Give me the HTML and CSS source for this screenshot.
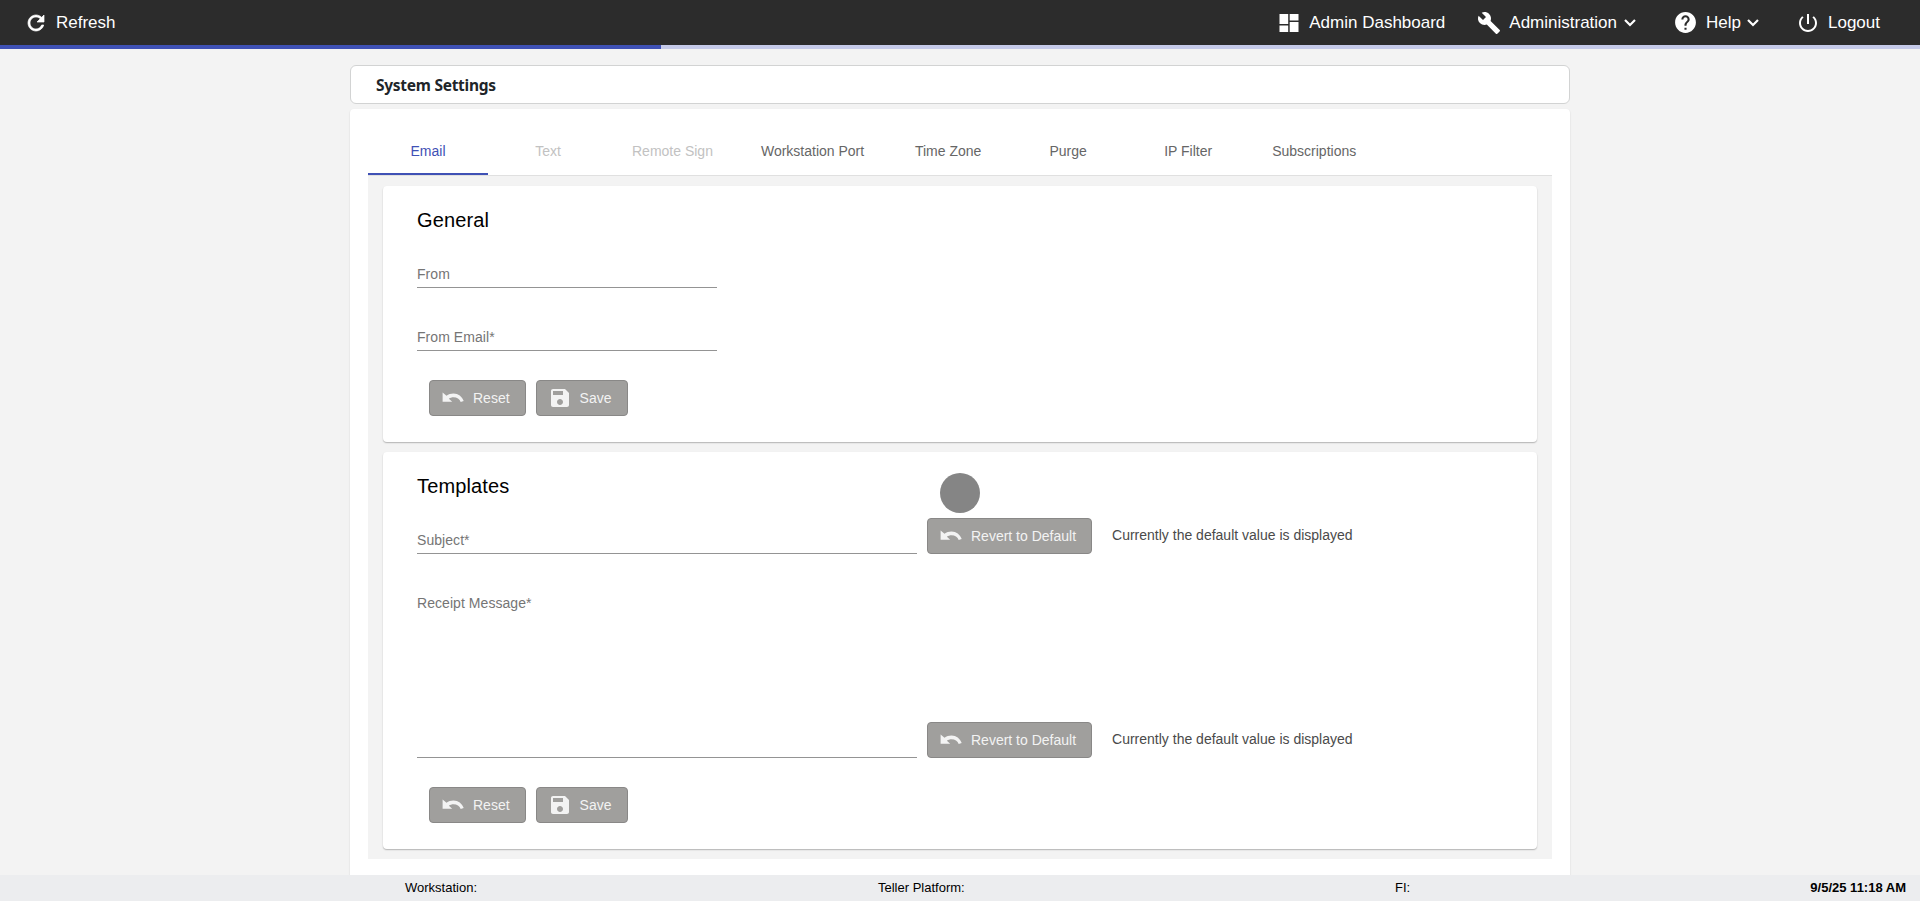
FILE: index.html
```html
<!DOCTYPE html>
<html lang="en">
<head>
<meta charset="utf-8">
<title>System Settings</title>
<link rel="stylesheet" href="styles.css">
</head>
<body>
<svg class="defs" aria-hidden="true">
  <symbol id="undo" viewBox="0 0 24 24"><path d="M12.5 7.5c-2.65 0-5.05.85-7 2.3L1.6 6.4v9.4h9.6l-3.3-3.1c1.3-.95 2.9-1.5 4.6-1.5 3.4 0 6.2 1.9 7.2 4.9l3-1C21.2 10.6 17.1 7.5 12.5 7.5z"/></symbol>
  <symbol id="save" viewBox="0 0 24 24"><path d="M17 3H5c-1.11 0-2 .9-2 2v14c0 1.1.89 2 2 2h14c1.1 0 2-.9 2-2V7l-4-4zm-5 16c-1.66 0-3-1.34-3-3s1.34-3 3-3 3 1.34 3 3-1.34 3-3 3zm3-10H5V5h10v4z"/></symbol>
  <symbol id="chevron" viewBox="0 0 12 8"><path d="M1 1l5 5 5-5" fill="none" stroke="currentColor" stroke-width="2.2"/></symbol>
</svg>
<div class="app">
  <header class="toolbar">
    <a class="nav refresh"><svg viewBox="0 0 24 24"><path d="M17.65 6.35C16.2 4.9 14.21 4 12 4c-4.42 0-7.99 3.58-7.99 8s3.57 8 7.99 8c3.73 0 6.84-2.55 7.73-6h-2.08c-.82 2.33-3.04 4-5.65 4-3.31 0-6-2.69-6-6s2.69-6 6-6c1.66 0 3.14.69 4.22 1.78L13 11h7V4l-2.35 2.35z" stroke="currentColor" stroke-width=".7"/></svg><span>Refresh</span></a>
    <a class="nav dashboard"><svg viewBox="0 0 24 24"><path d="M2.5 13h8.7V3H2.500v10zm0 8h8.700v-6.500H2.500V21zm10.200 0h8.800V11h-8.800v10zm0-18v6.500h8.800V3h-8.800z"/></svg><span>Admin Dashboard</span></a>
    <a class="nav administration"><svg viewBox="0 0 24 24"><path d="M22.7 19l-9.1-9.1c.9-2.3.4-5-1.5-6.9-2-2-5-2.4-7.4-1.3L9 6 6 9 1.6 4.7C.4 7.1.9 10.1 2.9 12.1c1.9 1.9 4.6 2.4 6.9 1.5l9.1 9.1c.4.4 1 .4 1.4 0l2.3-2.3c.5-.4.5-1.1.1-1.4z"/></svg><span>Administration</span><svg class="chevron"><use href="#chevron"/></svg></a>
    <a class="nav help"><svg viewBox="0 0 24 24"><path d="M12 2C6.48 2 2 6.48 2 12s4.48 10 10 10 10-4.48 10-10S17.52 2 12 2zm1 17h-2v-2h2v2zm2.07-7.75l-.9.92C13.45 12.9 13 13.5 13 15h-2v-.5c0-1.1.45-2.1 1.17-2.83l1.24-1.26c.37-.36.59-.86.59-1.41 0-1.1-.9-2-2-2s-2 .9-2 2H8c0-2.21 1.79-4 4-4s4 1.79 4 4c0 .88-.36 1.68-.93 2.25z"/></svg><span>Help</span><svg class="chevron"><use href="#chevron"/></svg></a>
    <a class="nav logout"><svg viewBox="0 0 24 24"><path d="M13 3h-2v10h2V3zm4.83 2.17l-1.42 1.42C17.99 7.86 19 9.81 19 12c0 3.87-3.13 7-7 7s-7-3.13-7-7c0-2.19 1.01-4.14 2.58-5.42L6.17 5.17C4.23 6.82 3 9.26 3 12c0 4.97 4.03 9 9 9s9-4.03 9-9c0-2.74-1.23-5.18-3.17-6.83z"/></svg><span>Logout</span></a>
  </header>
  <div class="progress"><div class="progress-fill"></div></div>

  <main class="content">
    <h1 class="page-title"><span>System Settings</span></h1>
    <section class="panel">
      <nav class="tabs">
        <a class="tab active">Email</a>
        <a class="tab disabled">Text</a>
        <a class="tab disabled">Remote Sign</a>
        <a class="tab">Workstation Port</a>
        <a class="tab">Time Zone</a>
        <a class="tab">Purge</a>
        <a class="tab">IP Filter</a>
        <a class="tab">Subscriptions</a>
      </nav>
      <div class="tab-body">
        <section class="card">
          <h2>General</h2>
          <div class="field first"><label>From</label></div>
          <div class="field"><label>From Email*</label></div>
          <div class="actions">
            <button class="btn"><svg><use href="#undo"/></svg><span>Reset</span></button>
            <button class="btn"><svg><use href="#save"/></svg><span>Save</span></button>
          </div>
        </section>
        <section class="card">
          <h2>Templates</h2>
          <div class="row">
            <div class="field first wide"><label>Subject*</label></div>
            <button class="btn"><svg><use href="#undo"/></svg><span>Revert to Default</span></button>
            <span class="note">Currently the default value is displayed</span>
          </div>
          <div class="row">
            <div class="field wide area"><label>Receipt Message*</label></div>
            <button class="btn"><svg><use href="#undo"/></svg><span>Revert to Default</span></button>
            <span class="note">Currently the default value is displayed</span>
          </div>
          <div class="actions">
            <button class="btn"><svg><use href="#undo"/></svg><span>Reset</span></button>
            <button class="btn"><svg><use href="#save"/></svg><span>Save</span></button>
          </div>
        </section>
      </div>
    </section>
  </main>

  <footer class="status">
    <span>Workstation:</span>
    <span>Teller Platform:</span>
    <span>FI:</span>
    <strong>9/5/25 11:18 AM</strong>
  </footer>
  <div class="spinner"></div>
</div>
</body>
</html>
```

FILE: styles.css
```css
* { box-sizing: border-box; }
body { margin: 0; font-family: "Liberation Sans", Arial, sans-serif; font-size: 14px; color: #000; background: #f3f3f3; }
.defs { display: none; }
.app { height: 901px; display: flex; flex-direction: column; overflow: hidden; position: relative; }

.toolbar { flex: none; height: 45px; display: flex; align-items: center; padding: 0 40px 0 24px; background: #2c2c2c; color: #fff; font-size: 17px; }
.nav { display: flex; align-items: center; white-space: nowrap; }
.nav svg { width: 24px; height: 24px; fill: currentColor; flex: none; }
.nav .chevron { width: 12px; height: 8px; margin: 1px 0 0 7px; }
.refresh { margin-right: auto; }
.refresh svg { margin-right: 8px; }
.dashboard svg { width: 24px; height: 24px; }
.dashboard span { margin-left: 8px; }
.administration { margin-left: 32px; }
.administration svg:first-child { margin-right: 8px; }
.help { margin-left: 37px; }
.help svg:first-child { width: 25px; height: 25px; margin-right: 8px; }
.help .chevron { margin-left: 6px; }
.logout { margin-left: 37px; }
.logout svg { margin-right: 8px; }

.progress { flex: none; height: 4px; background: #c5cae9; }
.progress-fill { width: 661px; height: 4px; background: #3f51b5; }

.content { flex: 1; min-height: 0; width: 1220px; margin: 0 auto; padding-top: 16px; display: flex; flex-direction: column; }
.page-title { flex: none; height: 39px; margin: 0 0 5px; padding: 0 25px; display: flex; align-items: center; border: 1px solid #d2d3d3; border-radius: 6px; background: #fff; color: #212529; font: bold 15.5px "Noto Sans", sans-serif; letter-spacing: -.27px; }
.panel { flex: 1; min-height: 0; padding: 18px 18px 16px; border-radius: 4px 4px 0 0; background: #fff; box-shadow: 0 1px 2px rgba(0,0,0,.14); }

.tabs { display: flex; height: 49px; border-bottom: 1px solid #e0e0e0; }
.tab { min-width: 120px; padding: 0 24px; height: 48px; line-height: 48px; text-align: center; color: #666; white-space: nowrap; }
.tab.active { color: #3f51b5; border-bottom: 2px solid #3f51b5; }
.tab.disabled { color: #c2c2c2; }
.tab-body { height: 683px; padding: 10px 15px; display: flex; flex-direction: column; gap: 10px; background: #f3f3f3; }

.card { padding: 22px 34px 26px; border-radius: 4px; background: #fff; box-shadow: 0 1px 1px rgba(0,0,0,.16), 0 1px 2px rgba(0,0,0,.12); }
.card h2 { margin: 0; font-size: 20px; font-weight: 400; line-height: 24px; letter-spacing: .15px; }
.field { width: 300px; height: 63px; display: flex; align-items: flex-end; padding-bottom: 3px; border-bottom: 1px solid #949494; color: #757575; line-height: 20px; letter-spacing: .06px; }
.field.first { height: 56px; }
.field.wide { width: 500px; }
.field.area { height: 204px; align-items: flex-start; padding-top: 39px; }
.row { display: flex; align-items: flex-end; }
.row .btn { margin-left: 10px; }
.note { margin-left: 20px; padding-bottom: 1px; line-height: 36px; color: #4a4a4a; }
.actions { display: flex; gap: 10px; margin: 29px 0 0 12px; }
.btn { height: 36px; display: flex; align-items: center; padding: 0 15px 0 11px; border: 1px solid #898887; border-radius: 4px; background: #a09f9d; color: #f3f3f3; font: 14px "Liberation Sans", Arial, sans-serif; }
.btn svg { width: 24px; height: 24px; margin-right: 8px; fill: currentColor; }

.status { flex: none; height: 26px; display: grid; grid-template-columns: 473px 517px 1fr auto; align-items: center; padding: 0 14px 2px 405px; background: #ecedef; font-size: 13px; z-index: 1; }

.spinner { position: absolute; left: 940px; top: 473px; width: 40px; height: 40px; border-radius: 50%; background: #858585; }
```
